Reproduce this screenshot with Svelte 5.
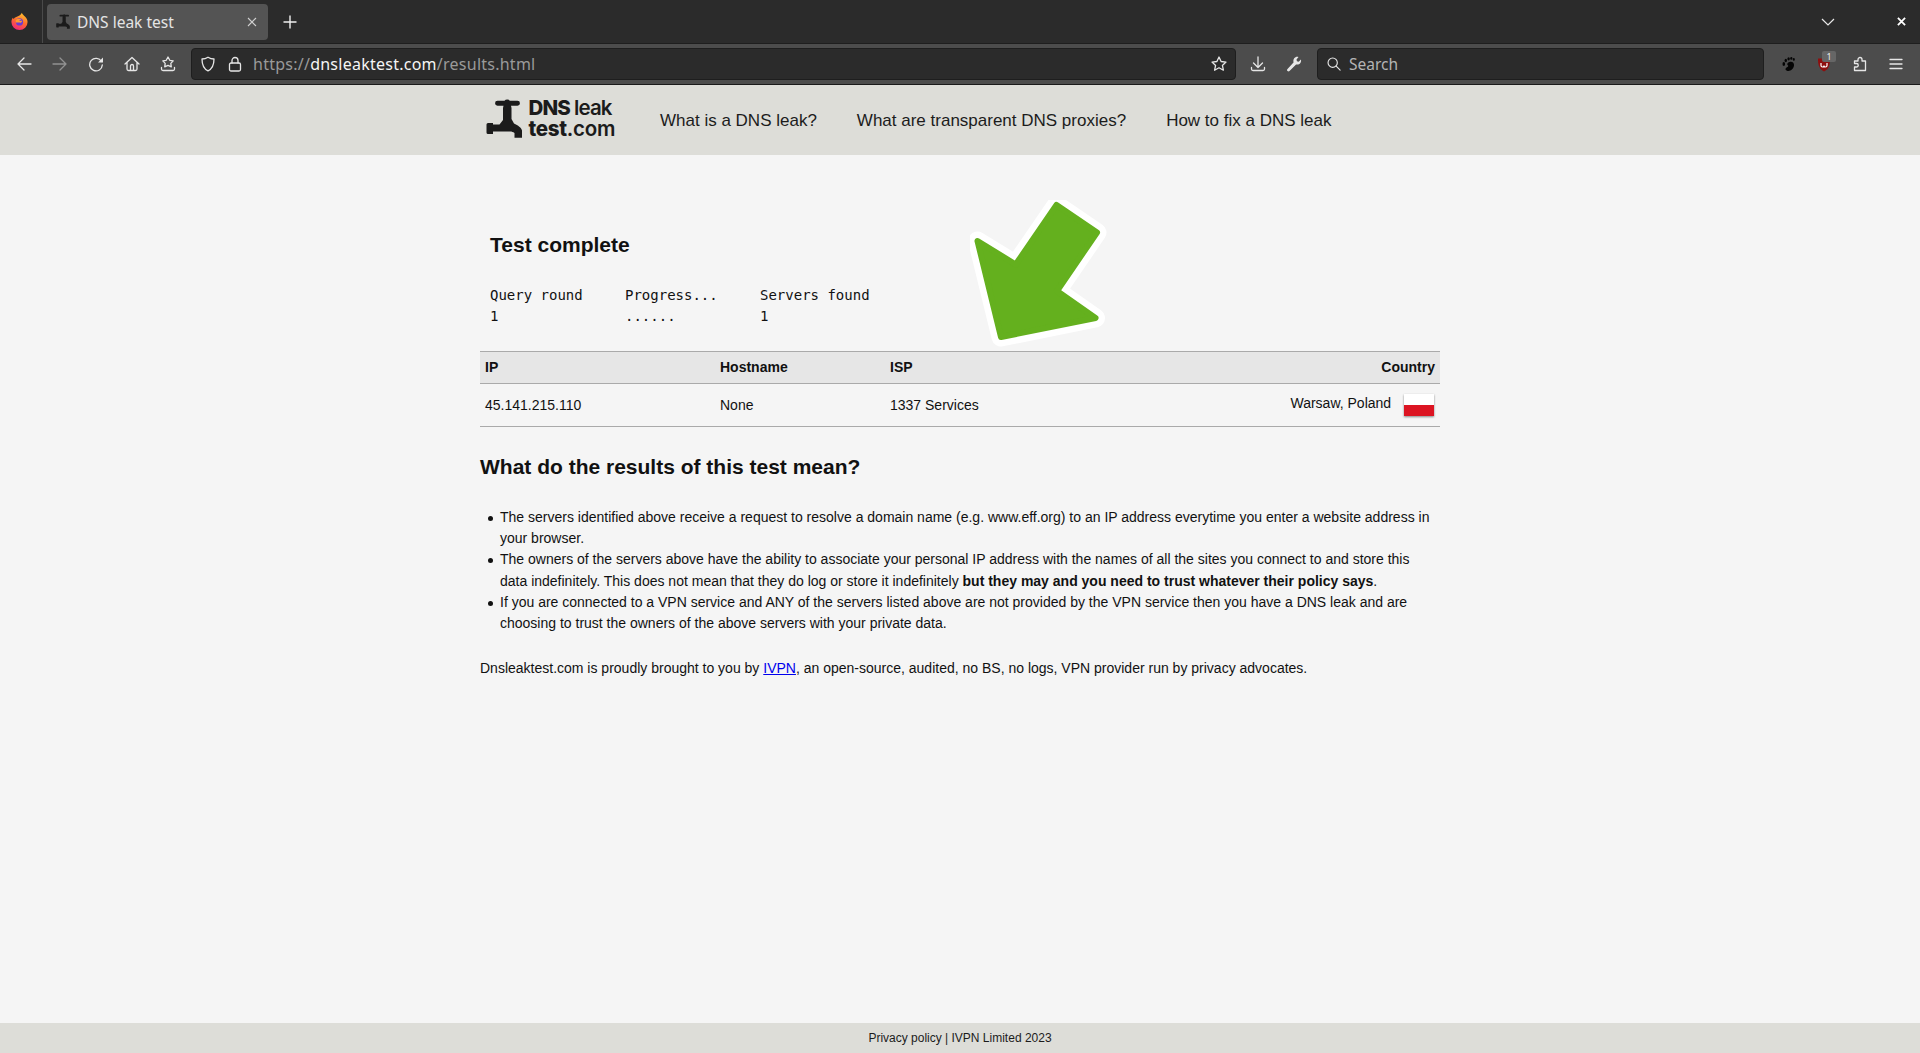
<script>
	const columns = [
		{ label: 'Query round', value: '1' },
		{ label: 'Progress...', value: '......' },
		{ label: 'Servers found', value: '1' }
	];
</script>

{#snippet tap(w)}
	<svg class="tap" viewBox="0 0 36.500 39" width={w} height={w * 39 / 36.5}>
		<path d="M11.500 1.800H18.500A3 2 0 0 1 24 1.800H31.500A2.400 2.400 0 0 1 31.500 6.700H25L25.500 9V20L28 24.500C32 26 35.500 29 36 31.500V38.700H28.500V34C27 33 26 32.500 24 32.500H7V35H2A1.500 1.500 0 0 1 .5 33.500V25.500A1.500 1.500 0 0 1 2 24H7V25.500H13.500L17 21V9L17.500 6.700H11.500A2.400 2.400 0 0 1 11.500 1.800Z" fill="#1b1b1b"/>
	</svg>
{/snippet}

<div class="browser">
	<div class="tabbar">
		<div class="ff">
			<svg viewBox="0 0 20 20" width="19" height="19">
				<defs>
					<linearGradient id="fox" x1="0.7" y1="0" x2="0.3" y2="1">
						<stop offset="0" stop-color="#ffc62e" />
						<stop offset="0.5" stop-color="#ff6a2e" />
						<stop offset="1" stop-color="#f0247e" />
					</linearGradient>
				</defs>
				<path d="M12.500 .8c.6 2 2 2.600 3.200 4 1.700 1.600 2.800 3.500 2.800 5.700a8.500 8.500 0 0 1-17 0C1.500 8.500 2.200 7 3 6l.8 1.300C5 5.300 8 5.200 10 3.800 11.200 3 12 2 12.500 .8z" fill="url(#fox)"/>
				<circle cx="10" cy="10.500" r="3.800" fill="#6a3bd4"/>
				<path d="M6.300 8.200c1.800-1.300 4.200-1.300 5.700 0l-2.500 1c1.300.4 2.500.2 3.400-.3-.1 1-.6 1.800-1.400 2.400-1.200-.5-3.500-.3-5.200-.3-.4-.8-.5-1.800 0-2.800z" fill="#ff9a2e"/>
			</svg>
		</div>
		<div class="tab">
			{@render tap(14)}
			<span class="tab-title">DNS leak test</span>
			<svg class="tab-x" viewBox="0 0 10 10" width="10" height="10"><path d="M1 1l8 8M9 1l-8 8" stroke="#d0d0d0" stroke-width="1.100"/></svg>
		</div>
		<svg class="plus" viewBox="0 0 14 14" width="14" height="14"><path d="M7 .5v13M.5 7h13" stroke="#f0f0f0" stroke-width="1.400"/></svg>
		<div class="spring"></div>
		<svg class="chev" viewBox="0 0 14 8" width="14" height="8"><path d="M1 1l6 6 6-6" fill="none" stroke="#e8e8e8" stroke-width="1.200"/></svg>
		<svg class="win-x" viewBox="0 0 10 10" width="9" height="9"><path d="M1 1l8 8M9 1l-8 8" stroke="#fff" stroke-width="2"/></svg>
	</div>

	<div class="toolbar">
		<div class="nav-icons">
			<svg viewBox="0 0 16 16" width="16" height="16"><path d="M15 8H2M8 2L2 8l6 6" class="ln"/></svg>
			<svg class="off" viewBox="0 0 16 16" width="16" height="16"><path d="M1 8h13M8 2l6 6-6 6" class="ln"/></svg>
			<svg viewBox="0 0 16 16" width="16" height="16"><path d="M13.500 5.500A6.300 6.300 0 1 0 14.300 9" class="ln"/><path d="M15 1.500V6.500H10z" fill="#e6e6e6"/></svg>
			<svg viewBox="0 0 16 16" width="16" height="16"><path d="M1 8l7-6.500L15 8M3 6.500V13a1.500 1.500 0 0 0 1.500 1.500h7A1.500 1.500 0 0 0 13 13V6.500M6.500 14.500V10a1.500 1.500 0 0 1 3 0v4.500" class="ln"/></svg>
			<svg viewBox="0 0 16 16" width="16" height="16"><path d="M8 1l1.800 3.300 3.400.6-2.400 2.500.5 3.400L8 9.300l-3.300 1.500.5-3.400-2.400-2.500 3.400-.6zM1.500 11.500v1.500a1.500 1.500 0 0 0 1.500 1.500h10a1.500 1.500 0 0 0 1.500-1.500v-1.500" class="ln"/></svg>
		</div>
		<div class="urlbar">
			<svg viewBox="0 0 16 16" width="16" height="16"><path d="M8 1.200c2 1.300 4 1.800 6 1.800 0 6-1.500 9.800-6 11.800C3.500 12.800 2 9 2 3c2 0 4-.5 6-1.800z" class="ln"/></svg>
			<svg class="lock" viewBox="0 0 16 16" width="16" height="16"><rect x="2.500" y="7" width="11" height="8" rx="1.500" class="ln"/><path d="M5 7V4.500a3 3 0 0 1 6 0V7" class="ln"/></svg>
			<span class="url"><span class="dim">https://</span>dnsleaktest.com<span class="dim">/results.html</span></span>
			<div class="spring"></div>
			<svg viewBox="0 0 16 16" width="16" height="16"><path d="M8 1l2.100 4.500 4.900.6-3.600 3.300 1 4.800L8 11.800l-4.400 2.400 1-4.800L1 6.100l4.900-.6z" class="ln"/></svg>
		</div>
		<div class="mid-icons">
			<svg viewBox="0 0 16 16" width="16" height="16"><path d="M8 1v10M3.500 7L8 11.500 12.500 7M1.500 11.500V13a1.500 1.500 0 0 0 1.500 1.500h10a1.500 1.500 0 0 0 1.500-1.500v-1.500" class="ln"/></svg>
			<svg viewBox="0 0 16 16" width="16" height="16"><path d="M1.500 15c-.8-.8-.5-1.500 0-2l6-6.500C7 4 7.800 2.200 9.500 1.300c1-.5 2-.6 3-.2L10.500 3.500l.4 1.800 1.800.4 2.200-2.200c.4 1.200.2 2.400-.5 3.400-1 1.400-2.700 2-4.300 1.500L3.500 15c-.6.500-1.300.6-2 0z" fill="#e6e6e6"/></svg>
		</div>
		<div class="searchbar">
			<svg viewBox="0 0 16 16" width="14" height="14"><circle cx="6.500" cy="6.500" r="5.300" class="ln"/><path d="M10.500 10.500L15 15" class="ln"/></svg>
			<span>Search</span>
		</div>
		<div class="ext-icons">
			<svg viewBox="0 0 16 16" width="16" height="16">
				<path d="M9.500 6c3-.6 4.800 1 4.500 3.500-.3 3-3.300 6-6.500 5.400-2.300-.4-2.700-2.300-1-3.300 1.500-.9 2.300-1.400 1.300-2.300C6.500 8.300 7.500 6.400 9.500 6z" fill="#050505"/>
				<ellipse cx="3.800" cy="8" rx="1.300" ry="2" fill="#050505"/>
				<ellipse cx="5.800" cy="4.500" rx="1.200" ry="1.800" fill="#050505"/>
				<ellipse cx="8.600" cy="2.800" rx="1.200" ry="1.600" fill="#050505"/>
				<ellipse cx="11.300" cy="2.400" rx="1.100" ry="1.400" fill="#050505"/>
				<ellipse cx="13.800" cy="3.400" rx="1" ry="1.300" fill="#050505"/>
			</svg>
			<div class="ublock">
				<svg viewBox="0 0 16 16" width="16" height="16"><path d="M2 1.500h12c.2 6.500-1.500 10.800-6 13-4.500-2.200-6.200-6.500-6-13z" fill="#8e0f0f"/><path d="M5 6v2.500a1.500 1.500 0 0 0 3 0 1.500 1.500 0 0 0 3 0V6" fill="none" stroke="#fff" stroke-width="1.200"/></svg>
				<span class="badge">1</span>
			</div>
			<svg viewBox="0 0 16 16" width="16" height="16"><path d="M8 1.500a2 2 0 0 1 2 2V5h3.500v9.500H2.500v-3.500h2a1.500 1.500 0 0 0 0-3.500h-2V5H6V3.500a2 2 0 0 1 2-2z" class="ln"/></svg>
			<svg viewBox="0 0 16 16" width="16" height="16"><path d="M2 3.500h12M2 8h12M2 12.500h12" class="ln"/></svg>
		</div>
	</div>
</div>

<div class="page">
	<header>
		<div class="wrap head-row">
			<div class="logo">
				{@render tap(36.5)}
				<div class="logo-text"><span class="first"><b>DNS</b> leak</span><br /><b>test</b>.com</div>
			</div>
			<nav>
				<span>What is a DNS leak?</span>
				<span>What are transparent DNS proxies?</span>
				<span>How to fix a DNS leak</span>
			</nav>
		</div>
	</header>

	<main class="wrap">
		<svg class="arrow" viewBox="0 0 150 150" width="150" height="150">
			<path d="M86.500 5L127 32.500 87 91 125.500 118 31 137 7.500 41 45.700 64.500z" fill="#fff" stroke="#fff" stroke-width="19" stroke-linejoin="round"/>
			<path d="M86.500 5L127 32.500 87 91 125.500 118 31 137 7.500 41 45.700 64.500z" fill="#64b01e" stroke="#64b01e" stroke-width="6" stroke-linejoin="round"/>
		</svg>

		<section class="status">
			<h2>Test complete</h2>
			<div class="rounds">
				{#each columns as col}
					<div>{col.label}<br />{col.value}</div>
				{/each}
			</div>
		</section>

		<table>
			<thead>
				<tr>
					<th class="c-ip">IP</th>
					<th class="c-host">Hostname</th>
					<th>ISP</th>
					<th class="right">Country</th>
				</tr>
			</thead>
			<tbody>
				<tr>
					<td>45.141.215.110</td>
					<td>None</td>
					<td>1337 Services</td>
					<td class="right flagcell">
						<span class="place">Warsaw, Poland</span>
						<span class="flag"></span>
					</td>
				</tr>
			</tbody>
		</table>

		<h2 class="mean">What do the results of this test mean?</h2>
		<ul>
			<li>The servers identified above receive a request to resolve a domain name (e.g. www.eff.org) to an IP address everytime you enter a website address in your browser.</li>
			<li>The owners of the servers above have the ability to associate your personal IP address with the names of all the sites you connect to and store this data indefinitely. This does not mean that they do log or store it indefinitely <b>but they may and you need to trust whatever their policy says</b>.</li>
			<li>If you are connected to a VPN service and ANY of the servers listed above are not provided by the VPN service then you have a DNS leak and are choosing to trust the owners of the above servers with your private data.</li>
		</ul>
		<p>Dnsleaktest.com is proudly brought to you by <a href="#ivpn">IVPN</a>, an open-source, audited, no BS, no logs, VPN provider run by privacy advocates.</p>
	</main>

	<footer>Privacy policy | IVPN Limited 2023</footer>
</div>

<style>
	:global(body) {
		margin: 0;
		background: #f5f5f5;
		font-family: 'Liberation Sans', sans-serif;
		color: #111;
	}
	.ln {
		fill: none;
		stroke: #e6e6e6;
		stroke-width: 1.300;
		stroke-linecap: round;
		stroke-linejoin: round;
	}
	.spring {
		flex: 1;
	}
	.browser {
		height: 85px;
		font-family: 'Noto Sans', sans-serif;
		display: flex;
		flex-direction: column;
		border-bottom: 1px solid #1a1a1a;
		box-sizing: border-box;
	}
	.tabbar {
		height: 44px;
		background: #2b2b2b;
		display: flex;
		align-items: center;
		box-sizing: border-box;
		border-bottom: 1px solid #1e1e1e;
	}
	.ff {
		width: 43px;
		height: 43px;
		padding-right: 3px;
		box-sizing: border-box;
		border-right: 1px solid #4a4a4a;
		display: flex;
		align-items: center;
		justify-content: center;
	}
	.tab {
		width: 221px;
		height: 36px;
		margin-left: 4px;
		padding: 0 11px 0 9px;
		box-sizing: border-box;
		background: #545454;
		border-radius: 4px;
		display: flex;
		align-items: center;
		gap: 7px;
		color: #e4e4e4;
		font-size: 15.500px;
	}
	.tab-title {
		flex: 1;
	}
	.plus {
		margin-left: 15px;
	}
	.chev {
		margin-right: 62px;
	}
	.win-x {
		margin-right: 14px;
	}
	.toolbar {
		flex: 1;
		background: #4c4c4c;
		display: flex;
		align-items: center;
	}
	.nav-icons {
		display: flex;
		gap: 20px;
		margin-left: 16px;
		width: 175px;
	}
	.off {
		opacity: 0.45;
	}
	.urlbar,
	.searchbar {
		height: 32px;
		box-sizing: border-box;
		background: #2b2b2b;
		border: 1px solid #1e1e1e;
		border-radius: 4px;
		display: flex;
		align-items: center;
	}
	.urlbar {
		width: 1045px;
		padding: 0 8px 0 8px;
		margin-right: 14px;
	}
	.lock {
		margin-left: 11px;
	}
	.url {
		margin-left: 10px;
		font-size: 16px;
		letter-spacing: 0.25px;
		color: #f5f5f5;
	}
	.dim {
		color: #9a9a9a;
	}
	.mid-icons {
		display: flex;
		gap: 20px;
		width: 56px;
	}
	.searchbar {
		margin-left: 11px;
		width: 447px;
		padding-left: 9px;
		gap: 8px;
		color: #b4b4b4;
		font-size: 15.500px;
	}
	.ext-icons {
		display: flex;
		gap: 20px;
		margin-left: 16px;
	}
	.ublock {
		position: relative;
		width: 16px;
		height: 16px;
	}
	.badge {
		position: absolute;
		top: -5px;
		left: 6px;
		min-width: 14px;
		height: 11px;
		background: #666;
		border-radius: 2px;
		color: #eee;
		font-size: 9px;
		line-height: 11px;
		text-align: center;
	}
	.page {
		min-height: 968px;
		display: flex;
		flex-direction: column;
		background: #f5f5f5;
	}
	.wrap {
		width: 960px;
		margin: 0 auto;
	}
	header {
		height: 70px;
		background: #ddddd8;
	}
	.head-row {
		height: 70px;
		display: flex;
		align-items: center;
	}
	.logo {
		display: flex;
		align-items: center;
		gap: 6px;
		margin-left: 6px;
		width: 174px;
		padding-bottom: 3px;
		box-sizing: border-box;
	}
	.logo-text {
		font-family: Inter, sans-serif;
		font-size: 20.500px;
		font-weight: 600;
		line-height: 20.500px;
		letter-spacing: -0.3px;
		color: #1b1b1b;
		white-space: nowrap;
	}
	.logo-text b {
		font-weight: 800;
	}
	.first {
		letter-spacing: -0.9px;
	}
	nav {
		display: flex;
		gap: 40px;
		padding-top: 2px;
		font-size: 17px;
		color: #1c1c1c;
	}
	main {
		flex: 1;
		position: relative;
		font-size: 14px;
		line-height: 21px;
	}
	.arrow {
		position: absolute;
		left: 490px;
		top: 45px;
	}
	.status {
		padding: 78px 10px 0;
		height: 196px;
		box-sizing: border-box;
	}
	h2 {
		margin: 0;
		font-size: 21px;
		line-height: 24px;
		font-weight: 700;
	}
	.rounds {
		margin-top: 28px;
		display: flex;
		font-family: 'DejaVu Sans Mono', monospace;
		font-size: 14px;
		line-height: 21px;
	}
	.rounds div {
		width: 135px;
	}
	table {
		width: 100%;
		border-collapse: collapse;
		table-layout: fixed;
	}
	th {
		height: 32px;
		padding: 0 5px;
		text-align: left;
		background: #e6e6e6;
		border-top: 1px solid #aaa;
		border-bottom: 1px solid #aaa;
		box-sizing: border-box;
	}
	td {
		height: 43px;
		padding: 0 5px;
		border-bottom: 1px solid #aaa;
		box-sizing: border-box;
	}
	.c-ip {
		width: 235px;
	}
	.c-host {
		width: 170px;
	}
	.right {
		text-align: right;
	}
	.flagcell {
		padding-right: 6px;
	}
	.place {
		position: relative;
		top: -1px;
	}
	.flag {
		display: inline-block;
		width: 30px;
		height: 22px;
		margin-left: 9px;
		vertical-align: middle;
		background: linear-gradient(#fff 50%, #dc1422 50%);
		box-shadow: 0 1px 2px rgba(0, 0, 0, 0.45);
	}
	.mean {
		margin-top: 28px;
	}
	ul {
		margin: 28px 0 0;
		padding: 0 0 0 20px;
		list-style: none;
	}
	li {
		position: relative;
		line-height: 21.200px;
	}
	li::before {
		content: '';
		position: absolute;
		left: -12px;
		top: 9px;
		width: 5px;
		height: 5px;
		border-radius: 50%;
		background: #111;
	}
	p {
		margin: 24px 0 0;
	}
	a {
		color: #0000ee;
	}
	footer {
		height: 30px;
		background: #ddddd8;
		text-align: center;
		font-size: 12px;
		line-height: 30px;
		color: #1c1c1c;
	}
</style>
